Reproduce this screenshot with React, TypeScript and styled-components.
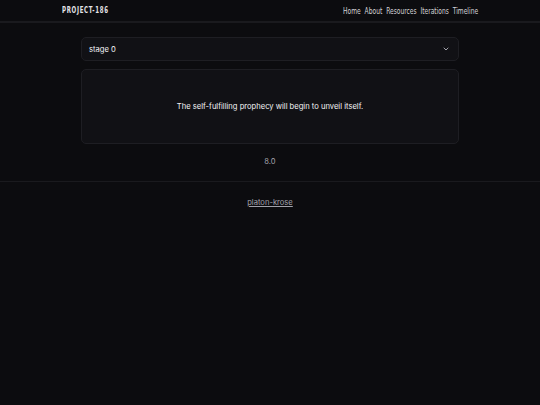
import * as React from 'react';
import styled, { createGlobalStyle } from 'styled-components';

const GlobalStyle = createGlobalStyle`
  html, body {
    margin: 0;
    padding: 0;
    background: #0c0c0f;
    color: #e4e4e7;
    font-family: Inter, "Noto Sans", sans-serif;
  }
`;

const navItems = ['Home', 'About', 'Resources', 'Iterations', 'Timeline'];

const App: React.FC = () => (
	<>
		<GlobalStyle />
		<Page>
			<Header>
				<HeaderInner>
					<Logo>PROJECT-186</Logo>
					<Nav>
						{navItems.map(item => <NavLink key={item}>{item}</NavLink>)}
					</Nav>
				</HeaderInner>
			</Header>

			<Main>
				<Select>
					<span>stage 0</span>
					<svg width="8" height="8" viewBox="0 0 24 24" fill="none" stroke="#a1a1aa" strokeWidth="3" strokeLinecap="round" strokeLinejoin="round">
						<path d="m6 9 6 6 6-6" />
					</svg>
				</Select>
				<Card>
					<CardText>The self-fulfilling prophecy will begin to unveil itself.</CardText>
				</Card>
				<Version>8.0</Version>
			</Main>

			<Footer>
				<FooterLink>platon-krose</FooterLink>
			</Footer>
		</Page>
	</>
);

// STYLE
const Page = styled.div`
	min-height: 405px;
	background: #0c0c0f;
`;

const Header = styled.header`
	border-bottom: 2px solid #1a1a1e;
`;

const HeaderInner = styled.div`
	width: 416px;
	margin: 0 auto;
	height: 21px;
	display: flex;
	align-items: center;
	justify-content: space-between;
`;

// condensed display face squeezed horizontally, like the original's narrow font
const Logo = styled.div`
	font-family: "DejaVu Sans Condensed", "DejaVu Sans", sans-serif;
	font-weight: 700;
	font-size: 8px;
	letter-spacing: 0.9px;
	color: #e4e4e7;
	transform: scaleX(0.76);
	transform-origin: left center;
`;

const Nav = styled.nav`
	display: flex;
	gap: 5px;
	transform: scaleX(0.78);
	transform-origin: right center;
`;

const NavLink = styled.a`
	font-family: "DejaVu Sans Condensed", "DejaVu Sans", sans-serif;
	font-size: 8.5px;
	color: #d4d4d8;
`;

const Main = styled.main`
	width: 378px;
	margin: 0 auto;
	padding-top: 14px;
	display: flex;
	flex-direction: column;
	gap: 8px;
`;

const Select = styled.div`
	height: 22px;
	padding: 0 8px 0 7px;
	display: flex;
	align-items: center;
	justify-content: space-between;
	background: #111115;
	border: 1px solid #1e1e23;
	border-radius: 5px;
	font-size: 7.6px;
	color: #f4f4f5;
`;

const Card = styled.div`
	height: 73px;
	display: flex;
	align-items: center;
	justify-content: center;
	background: #111115;
	border: 1px solid #1e1e23;
	border-radius: 5px;
`;

const CardText = styled.p`
	margin: 0;
	font-size: 7.6px;
	color: #f4f4f5;
`;

const Version = styled.div`
	margin-top: 5px;
	padding-bottom: 15px;
	text-align: center;
	font-size: 7.6px;
	color: #a1a1aa;
`;

const Footer = styled.footer`
	border-top: 1px solid #1a1a1e;
	padding-top: 7px;
	text-align: center;
`;

const FooterLink = styled.a`
	font-size: 7.6px;
	color: #a1a1aa;
	text-decoration: underline;
`;

export default App;
